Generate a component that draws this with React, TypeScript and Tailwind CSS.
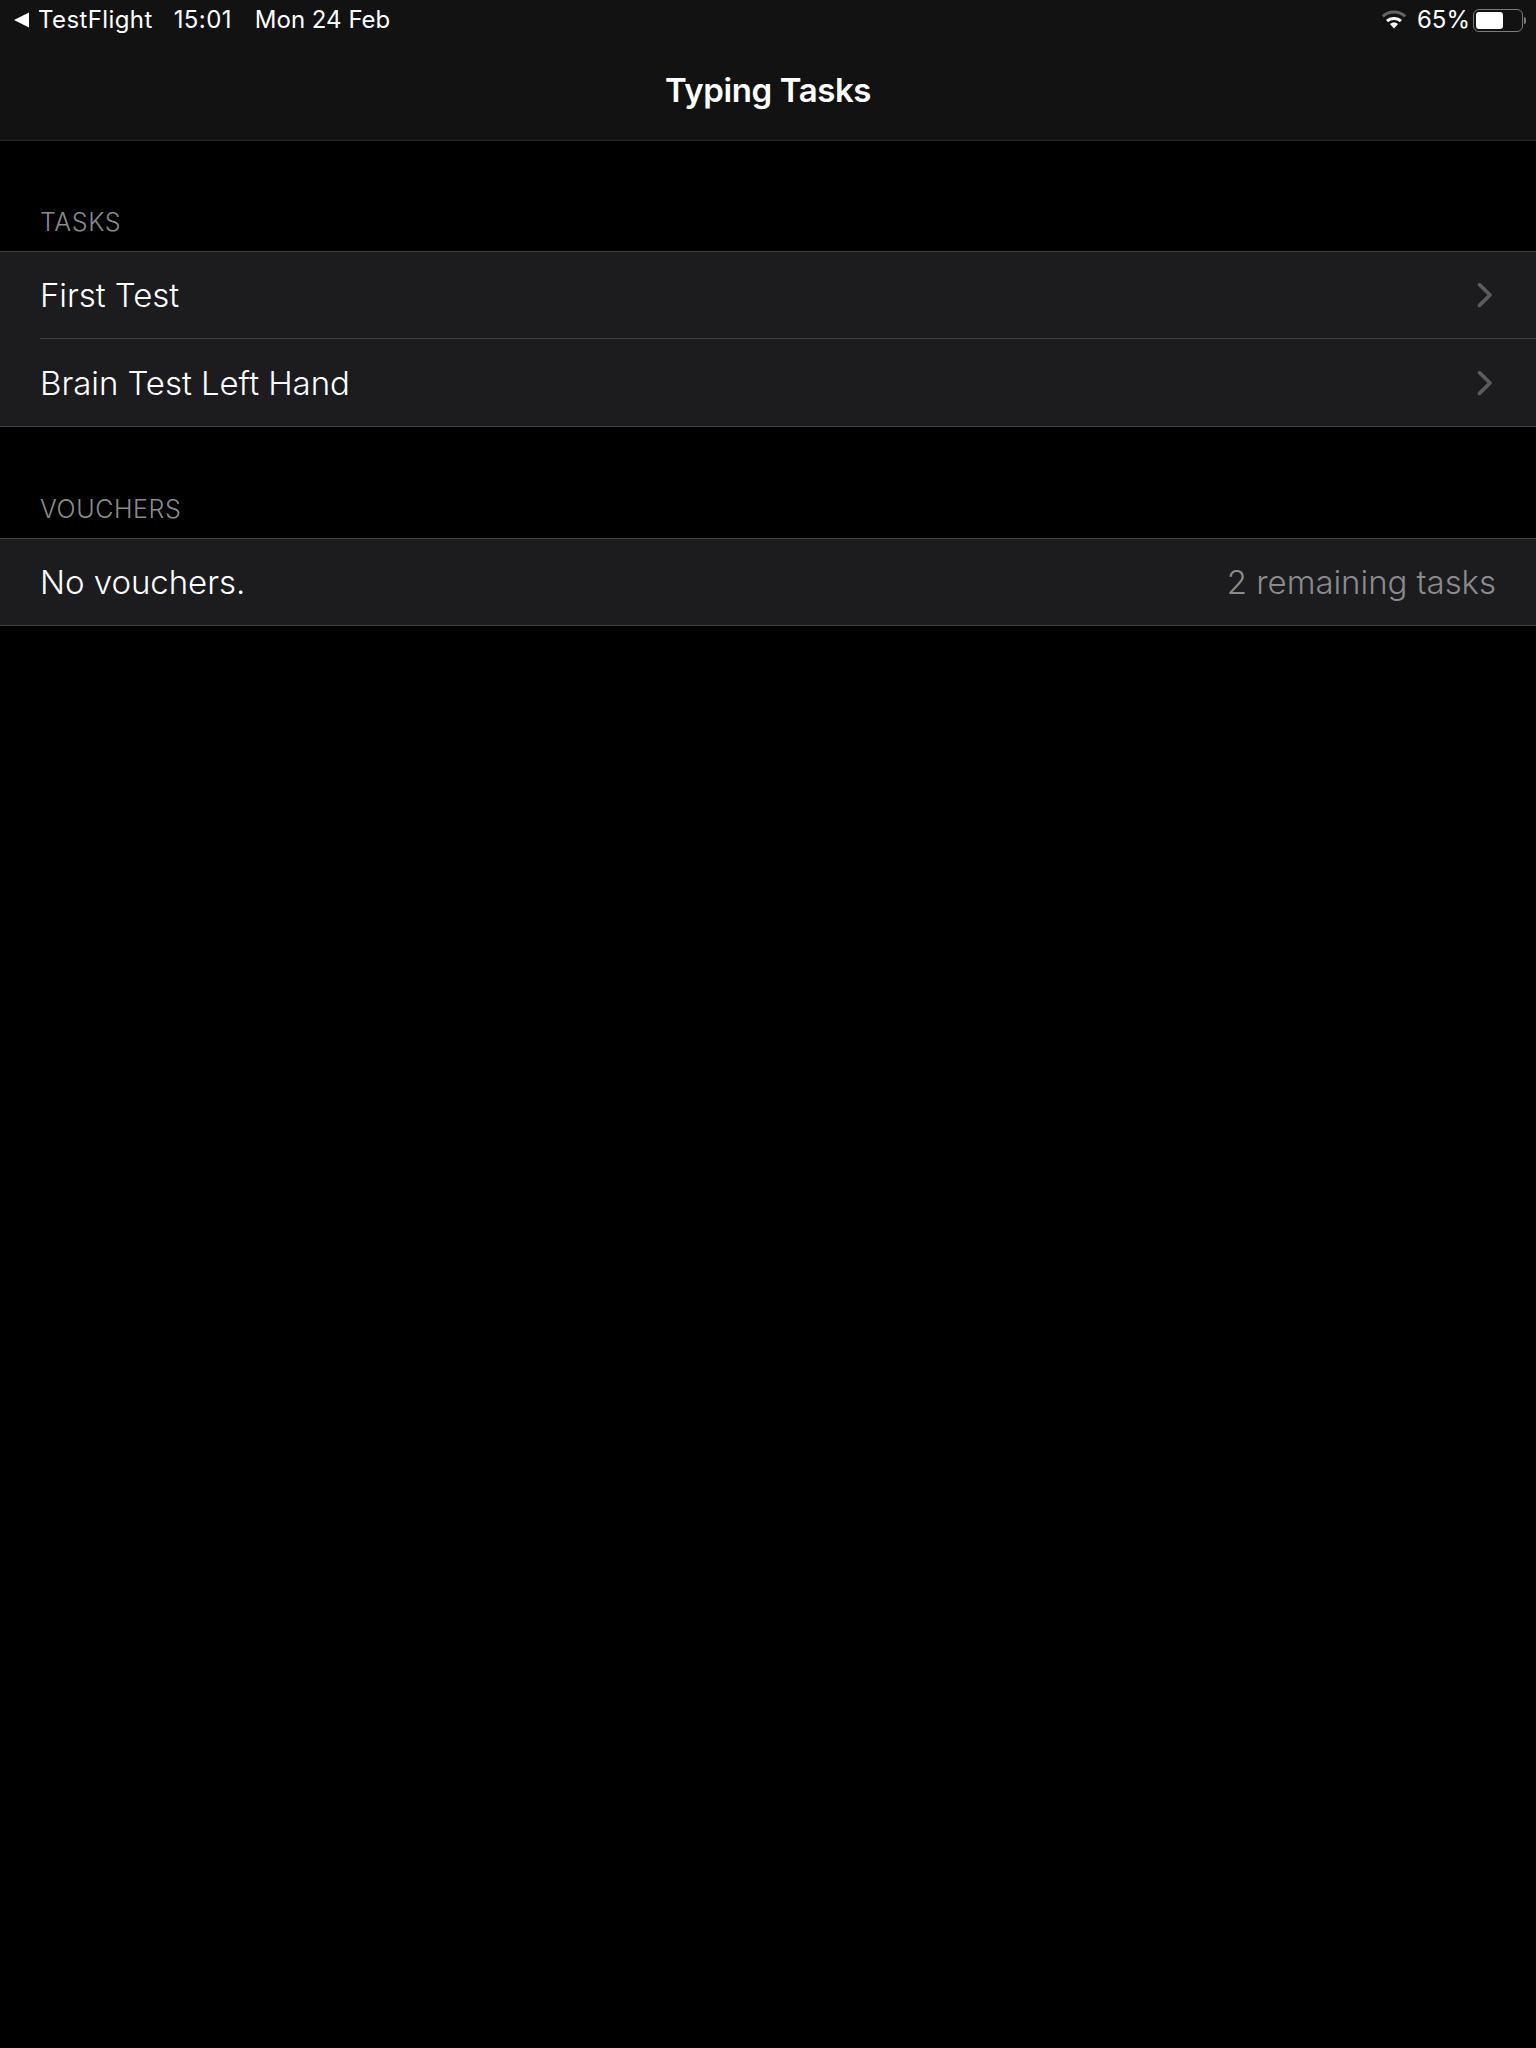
import React from 'react';

const font = "font-['Inter',sans-serif]";

const Chevron = () => (
    <svg width="16" height="26" viewBox="0 0 16 26" fill="none" className="shrink-0 mr-[4px] -mt-[2px]">
        <path d="M3.5 2.6 L14 13 L3.5 23.4" stroke="#5b5b5e" strokeWidth="3.6" strokeLinecap="round" strokeLinejoin="round" />
    </svg>
);

const Wifi = () => (
    <svg width="26" height="20" viewBox="0 0 26 20" fill="#fff">
        <path d="M13 0.5C8.2 0.5 3.9 2.3 0.8 5.3L2.9 7.5C5.5 5 9 3.5 13 3.5S20.5 5 23.1 7.5L25.2 5.3C22.1 2.3 17.8 0.5 13 0.5Z" opacity="0.35" />
        <path d="M13 7C9.9 7 7.1 8.2 5 10.1L7.1 12.3C8.7 10.9 10.7 10 13 10S17.3 10.9 18.9 12.3L21 10.1C18.9 8.2 16.1 7 13 7Z" />
        <path d="M13 12.4C11.4 12.4 10 13 8.9 14L13 18.6L17.1 14C16 13 14.6 12.4 13 12.4Z" />
    </svg>
);

const Battery = () => (
    <div className="flex items-center">
        <div className="w-[50px] h-[23px] rounded-[6px] border-[1.5px] border-[#7c7c7c] p-[2px] flex">
            <div className="w-[27px] h-full rounded-[3px] bg-white" />
        </div>
        <div className="w-[2px] h-[7px] ml-[1px] rounded-r-sm bg-[#7c7c7c]" />
    </div>
);

const StatusBar = () => (
    <div className="h-[40px] flex items-center justify-between pl-[14px] pr-[10px] text-[24px] text-white">
        <div className="flex items-center">
            <svg width="15" height="16" viewBox="0 0 15 16" fill="#fff" className="mr-[9px]">
                <path d="M15 0.5V15.5L0 8Z" />
            </svg>
            <span className="tracking-[0.4px]">TestFlight</span>
            <span className="ml-[21px] tracking-[0.4px]">15:01</span>
            <span className="ml-[23px]">Mon 24 Feb</span>
        </div>
        <div className="flex items-center">
            <Wifi />
            <span className="ml-[10px] mr-[3px] text-[24px]">65%</span>
            <Battery />
        </div>
    </div>
);

const Row = ({ title, detail, chevron, inset, height = 'h-[87px]' }: { title: string; detail?: string; chevron?: boolean; inset?: boolean; height?: string }) => (
    <div className={`${height} pl-[40px] bg-[#1c1c1e]`}>
        <div className={`h-full flex items-center justify-between pr-[40px] pt-[2px] text-[33px] tracking-[-0.05px] font-[350] ${inset ? 'border-b border-[#3f3f41]' : ''}`}>
            <span className="text-white">{title}</span>
            {detail && <span className="text-[#8b8b8d]">{detail}</span>}
            {chevron && <Chevron />}
        </div>
    </div>
);

const Section = ({ label, children }: { label: string; children: React.ReactNode }) => (
    <section>
        <div className="h-[29px] px-[40px] mb-[14px] text-[25px] leading-[29px] tracking-[0.6px] font-[350] text-[#8b8b8d]">{label}</div>
        <div className="border-y border-[#3f3f41]">{children}</div>
    </section>
);

export default function App() {
    return (
        <div className={`min-h-[2048px] bg-black ${font}`}>
            <header className="h-[141px] bg-[#121212] border-b border-[#2a2a2b]">
                <StatusBar />
                <h1 className="h-[100px] pt-[2px] flex items-center justify-center text-[33px] tracking-[-0.4px] font-semibold text-white">
                    Typing Tasks
                </h1>
            </header>
            <main className="pt-[67px] flex flex-col gap-[68px]">
                <Section label="TASKS">
                    <Row title="First Test" chevron inset />
                    <Row title="Brain Test Left Hand" chevron />
                </Section>
                <Section label="VOUCHERS">
                    <Row title="No vouchers." detail="2 remaining tasks" height="h-[86px]" />
                </Section>
            </main>
        </div>
    );
}
